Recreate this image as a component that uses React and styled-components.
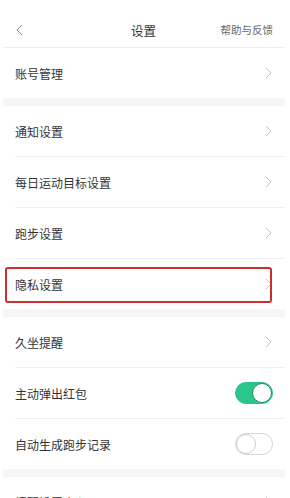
import styled, { createGlobalStyle } from 'styled-components';

const GlobalStyle = createGlobalStyle`
  body {
    margin: 0;
    background: #fff;
    font-family: "Noto Sans CJK SC", "Noto Sans", sans-serif;
  }
`;

const sections = [
  [{ label: '账号管理', kind: 'arrow' }],
  [
    { label: '通知设置', kind: 'arrow' },
    { label: '每日运动目标设置', kind: 'arrow' },
    { label: '跑步设置', kind: 'arrow' },
    { label: '隐私设置', kind: 'arrow', marked: true },
  ],
  [
    { label: '久坐提醒', kind: 'arrow' },
    { label: '主动弹出红包', kind: 'switch', on: true },
    { label: '自动生成跑步记录', kind: 'switch', on: false },
  ],
  [{ label: '提醒设置中心', kind: 'arrow' }],
];

function Chevron({ left }) {
  return (
    <svg width="7" height="12" viewBox="0 0 7 12">
      <path
        d={left ? 'M6 1 L1 6 L6 11' : 'M1 1 L6 6 L1 11'}
        fill="none"
        stroke={left ? '#8a8a8a' : '#c4c4c4'}
        strokeWidth="1"
      />
    </svg>
  );
}

export default function App() {
  return (
    <>
      <GlobalStyle />
      <Page>
        <Header>
          <Back><Chevron left /></Back>
          <Title>设置</Title>
          <Help>帮助与反馈</Help>
        </Header>
        {sections.map((rows, i) => (
          <Section key={i} $first={i === 0}>
            {rows.map((row) => (
              <Row key={row.label}>
                <Label>{row.label}</Label>
                {row.kind === 'arrow' ? (
                  <Chevron />
                ) : (
                  <Switch $on={row.on}>
                    <Knob $on={row.on} />
                  </Switch>
                )}
                {row.marked && <Marker />}
              </Row>
            ))}
          </Section>
        ))}
      </Page>
    </>
  );
}

const Page = styled.div`
  width: 282px;
  margin: 0 5px 0 3px;
  height: 498px;
  overflow: hidden;
`;

const Header = styled.div`
  height: 35px;
  padding-top: 12px;
  display: flex;
  align-items: center;
  justify-content: space-between;
  border-bottom: 1px solid #ececec;
  position: relative;
`;

const Back = styled.div`
  width: 40px;
  padding-left: 13px;
  display: flex;
  align-items: center;
  box-sizing: border-box;
`;

const Title = styled.div`
  font-size: 12.5px;
  color: #333;
  position: absolute;
  left: 128px;
  top: 21px;
`;

const Help = styled.div`
  font-size: 10.5px;
  color: #666;
  padding-right: 12px;
`;

const Section = styled.div`
  border-top: ${(p) => (p.$first ? 'none' : '8px solid #f6f6f6')};
`;

const Row = styled.div`
  position: relative;
  height: 50px;
  margin-left: 12px;
  padding-right: 13px;
  display: flex;
  align-items: center;
  justify-content: space-between;
  border-bottom: 1px solid #efefef;
  &:last-child {
    border-bottom: none;
  }
`;

const Label = styled.span`
  font-size: 12px;
  color: #333;
`;

const Switch = styled.div`
  width: 38px;
  height: 22px;
  border-radius: 11px;
  box-sizing: border-box;
  margin-right: -1px;
  background: ${(p) => (p.$on ? '#2bc48b' : '#fff')};
  border: 1px solid ${(p) => (p.$on ? '#2bc48b' : '#d6d6d6')};
  display: flex;
  justify-content: ${(p) => (p.$on ? 'flex-end' : 'flex-start')};
  align-items: center;
`;

const Knob = styled.div`
  width: 20px;
  height: 20px;
  border-radius: 50%;
  background: #fff;
  box-sizing: border-box;
  border: 1px solid ${(p) => (p.$on ? '#1e8f64' : '#cfcfcf')};
`;

const Marker = styled.div`
  position: absolute;
  left: -10px;
  top: 8px;
  width: 267px;
  height: 36px;
  box-sizing: border-box;
  border: 2.5px solid #cc2f2b;
  border-radius: 3px;
`;
